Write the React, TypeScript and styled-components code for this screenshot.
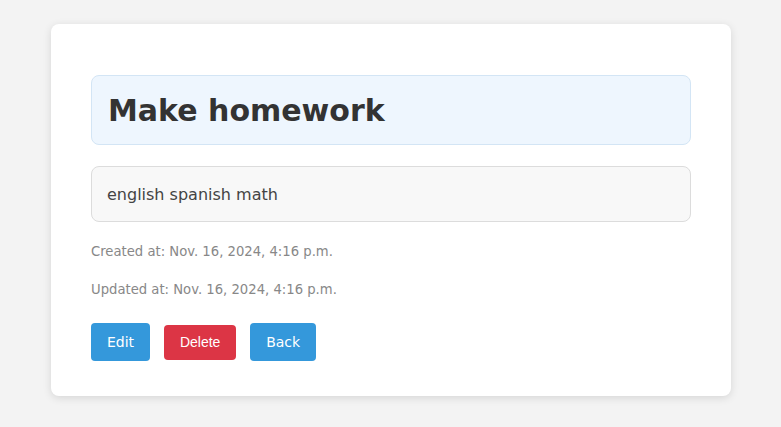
import React from "react";
import styled, { createGlobalStyle } from "styled-components";

const GlobalStyle = createGlobalStyle`
  body {
    margin: 0;
    background: #f3f3f3;
    font-family: "DejaVu Sans", "Open Sans", sans-serif;
  }
`;

const Page = styled.div`
  padding: 24px 50px 31px 51px;
`;

const Card = styled.div`
  background: #fff;
  border-radius: 8px;
  box-shadow: 0 2px 8px rgba(0, 0, 0, 0.12);
  padding: 51px 40px 35px;
  display: flex;
  flex-direction: column;
`;

const TitleBox = styled.div`
  background: #eef6fe;
  border: 1px solid #d3e5f5;
  border-radius: 8px;
  height: 70px;
  box-sizing: border-box;
  padding: 0 16px;
  display: flex;
  align-items: center;
`;

const Title = styled.h1`
  margin: 0;
  font-size: 30px;
  font-weight: 600;
  color: #333;
`;

const DescBox = styled.div`
  margin-top: 21px;
  background: #f8f8f8;
  border: 1px solid #dcdcdc;
  border-radius: 8px;
  height: 56px;
  box-sizing: border-box;
  padding: 0 15px;
  display: flex;
  align-items: center;
  font-size: 16px;
  color: #444;
`;

const MetaList = styled.div`
  margin-top: 22px;
  display: flex;
  flex-direction: column;
  gap: 22px;
`;

const Meta = styled.p`
  margin: 0;
  font-size: 13.2px;
  color: #888;
  height: 16px;
  line-height: 16px;
`;

const Actions = styled.div`
  margin-top: 25px;
  display: flex;
  align-items: center;
  gap: 14px;
`;

const LinkButton = styled.a`
  display: inline-flex;
  align-items: center;
  justify-content: center;
  height: 38px;
  padding: 0 16px;
  background: #3498db;
  color: #fff;
  border-radius: 4px;
  font-size: 14px;
  text-decoration: none;
  box-sizing: border-box;
`;

const DangerButton = styled.button`
  height: 35px;
  width: 72px;
  padding: 0;
  background: #dc3545;
  color: #fff;
  border: none;
  border-radius: 4px;
  font-family: "Liberation Sans", Arial, sans-serif;
  font-size: 14px;
`;

export default function App() {
  return (
    <>
      <GlobalStyle />
      <Page>
        <Card>
          <TitleBox>
            <Title>Make homework</Title>
          </TitleBox>
          <DescBox>english spanish math</DescBox>
          <MetaList>
            <Meta>Created at: Nov. 16, 2024, 4:16 p.m.</Meta>
            <Meta>Updated at: Nov. 16, 2024, 4:16 p.m.</Meta>
          </MetaList>
          <Actions>
            <LinkButton href="#">Edit</LinkButton>
            <DangerButton>Delete</DangerButton>
            <LinkButton href="#">Back</LinkButton>
          </Actions>
        </Card>
      </Page>
    </>
  );
}
